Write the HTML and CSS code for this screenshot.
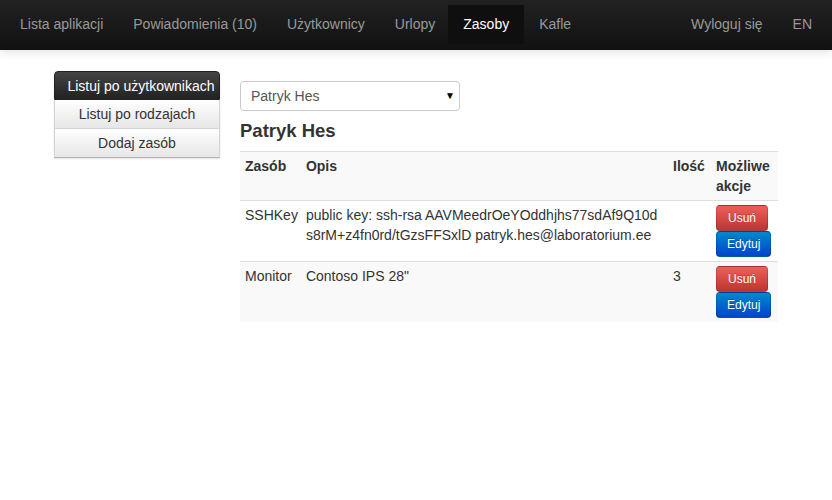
FILE: index.html
```html
<!DOCTYPE html>
<html lang="pl">
<head>
<meta charset="utf-8">
<title>Zasoby</title>
<link rel="stylesheet" href="styles.css">
</head>
<body>
<header class="navbar">
  <ul class="nav">
    <li><a href="#">Lista aplikacji</a></li>
    <li><a href="#">Powiadomienia (10)</a></li>
    <li><a href="#">Użytkownicy</a></li>
    <li><a href="#">Urlopy</a></li>
    <li class="active"><a href="#">Zasoby</a></li>
    <li><a href="#">Kafle</a></li>
  </ul>
  <ul class="nav">
    <li><a href="#">Wyloguj się</a></li>
    <li><a href="#">EN</a></li>
  </ul>
</header>
<main class="page">
  <aside class="sidebar">
    <a class="side-btn side-active" href="#">Listuj po użytkownikach</a>
    <a class="side-btn" href="#">Listuj po rodzajach</a>
    <a class="side-btn side-last" href="#">Dodaj zasób</a>
  </aside>
  <section class="content">
    <div class="select"><span>Patryk Hes</span><span class="caret">▼</span></div>
    <h3 class="title">Patryk Hes</h3>
    <table class="table">
      <thead>
        <tr>
          <th class="c1">Zasób</th>
          <th class="c2">Opis</th>
          <th class="c3">Ilość</th>
          <th class="c4">Możliwe akcje</th>
        </tr>
      </thead>
      <tbody>
        <tr>
          <td class="c1">SSHKey</td>
          <td>public key: ssh-rsa AAVMeedrOeYOddhjhs77sdAf9Q10d s8rM+z4fn0rd/tGzsFFSxlD patryk.hes@laboratorium.ee</td>
          <td></td>
          <td><a class="btn btn-danger" href="#">Usuń</a><a class="btn btn-primary" href="#">Edytuj</a></td>
        </tr>
        <tr class="striped">
          <td class="c1">Monitor</td>
          <td>Contoso IPS 28"</td>
          <td>3</td>
          <td><a class="btn btn-danger" href="#">Usuń</a><a class="btn btn-primary" href="#">Edytuj</a></td>
        </tr>
      </tbody>
    </table>
  </section>
</main>
</body>
</html>
```

FILE: styles.css
```css
* { box-sizing: border-box; }
html, body { margin: 0; padding: 0; }
body {
  font-family: "Liberation Sans", Arial, sans-serif;
  font-size: 14px;
  line-height: 20px;
  color: #333;
  background: #fff;
  width: 832px;
  height: 500px;
  overflow: hidden;
}
a { text-decoration: none; }

.navbar {
  height: 50px;
  background: linear-gradient(to bottom, #222222, #111111);
  box-shadow: 0 1px 10px rgba(0,0,0,0.15);
  display: flex;
  justify-content: space-between;
  padding: 0 5px;
}
.nav {
  list-style: none;
  margin: 0;
  padding: 0;
  display: flex;
}
.nav a {
  display: block;
  margin-top: 5px;
  padding: 10px 15px;
  line-height: 19px;
  color: #999;
  font-size: 14px;
}
.nav .active a {
  margin-left: -2px;
  margin-right: 0;
  background: #0f0f0f;
  color: #fff;
}

.page {
  display: flex;
  align-items: flex-start;
  padding: 21px 0 0 54px;
}
.sidebar {
  width: 166px;
  display: flex;
  flex-direction: column;
  box-shadow: 0 1px 2px rgba(0,0,0,0.12);
  border-radius: 4px 4px 0 0;
}
.side-btn {
  display: block;
  height: 29px;
  padding-top: 1px;
  line-height: 27px;
  text-align: center;
  color: #333;
  background: linear-gradient(to bottom, #ffffff, #e6e6e6);
  border: 1px solid #d4d4d4;
  border-top: none;
  flex: none;
}
.side-active {
  background: linear-gradient(to bottom, #444444, #222222);
  color: #fff;
  border: 1px solid #222;
  border-radius: 4px 4px 0 0;
  padding: 0 0 0 8px;
  line-height: 28px;
  white-space: nowrap;
}
.side-last { border-bottom-color: #b3b3b3; }

.content {
  margin-left: 20px;
  width: 538px;
  padding-top: 10px;
}
.select {
  width: 220px;
  height: 30px;
  border: 1px solid #ccc;
  border-radius: 4px;
  display: flex;
  justify-content: space-between;
  align-items: center;
  padding: 0 4px 0 10px;
  color: #555;
}
.caret {
  font-size: 10px;
  color: #000;
}
.title {
  margin: 10px 0 10px;
  font-size: 18.5px;
  line-height: 20px;
  font-weight: bold;
  color: #333;
}
.table {
  width: 538px;
  border-collapse: collapse;
  border-spacing: 0;
}
.table th, .table td {
  padding: 4px 5px;
  text-align: left;
  vertical-align: top;
  border-top: 1px solid #ddd;
  line-height: 20px;
}
.table th { font-weight: bold; }
.table thead tr, .table .striped { background: #f9f9f9; }
.table .c1 { width: 58px; padding-right: 3px; }
.c3 { width: 43px; }
.c4 { width: 67px; }

.btn {
  display: block;
  width: max-content;
  height: 26px;
  padding: 2px 10px;
  font-size: 12px;
  line-height: 20px;
  color: #fff;
  border-radius: 4px;
  text-shadow: 0 -1px 0 rgba(0,0,0,0.25);
  border: 1px solid rgba(0,0,0,0.15);
  border-bottom-color: rgba(0,0,0,0.3);
}
.btn-danger { background: linear-gradient(to bottom, #ee5f5b, #bd362f); padding: 2px 11px; }
.btn-primary { background: linear-gradient(to bottom, #0088cc, #0044cc); }
```
